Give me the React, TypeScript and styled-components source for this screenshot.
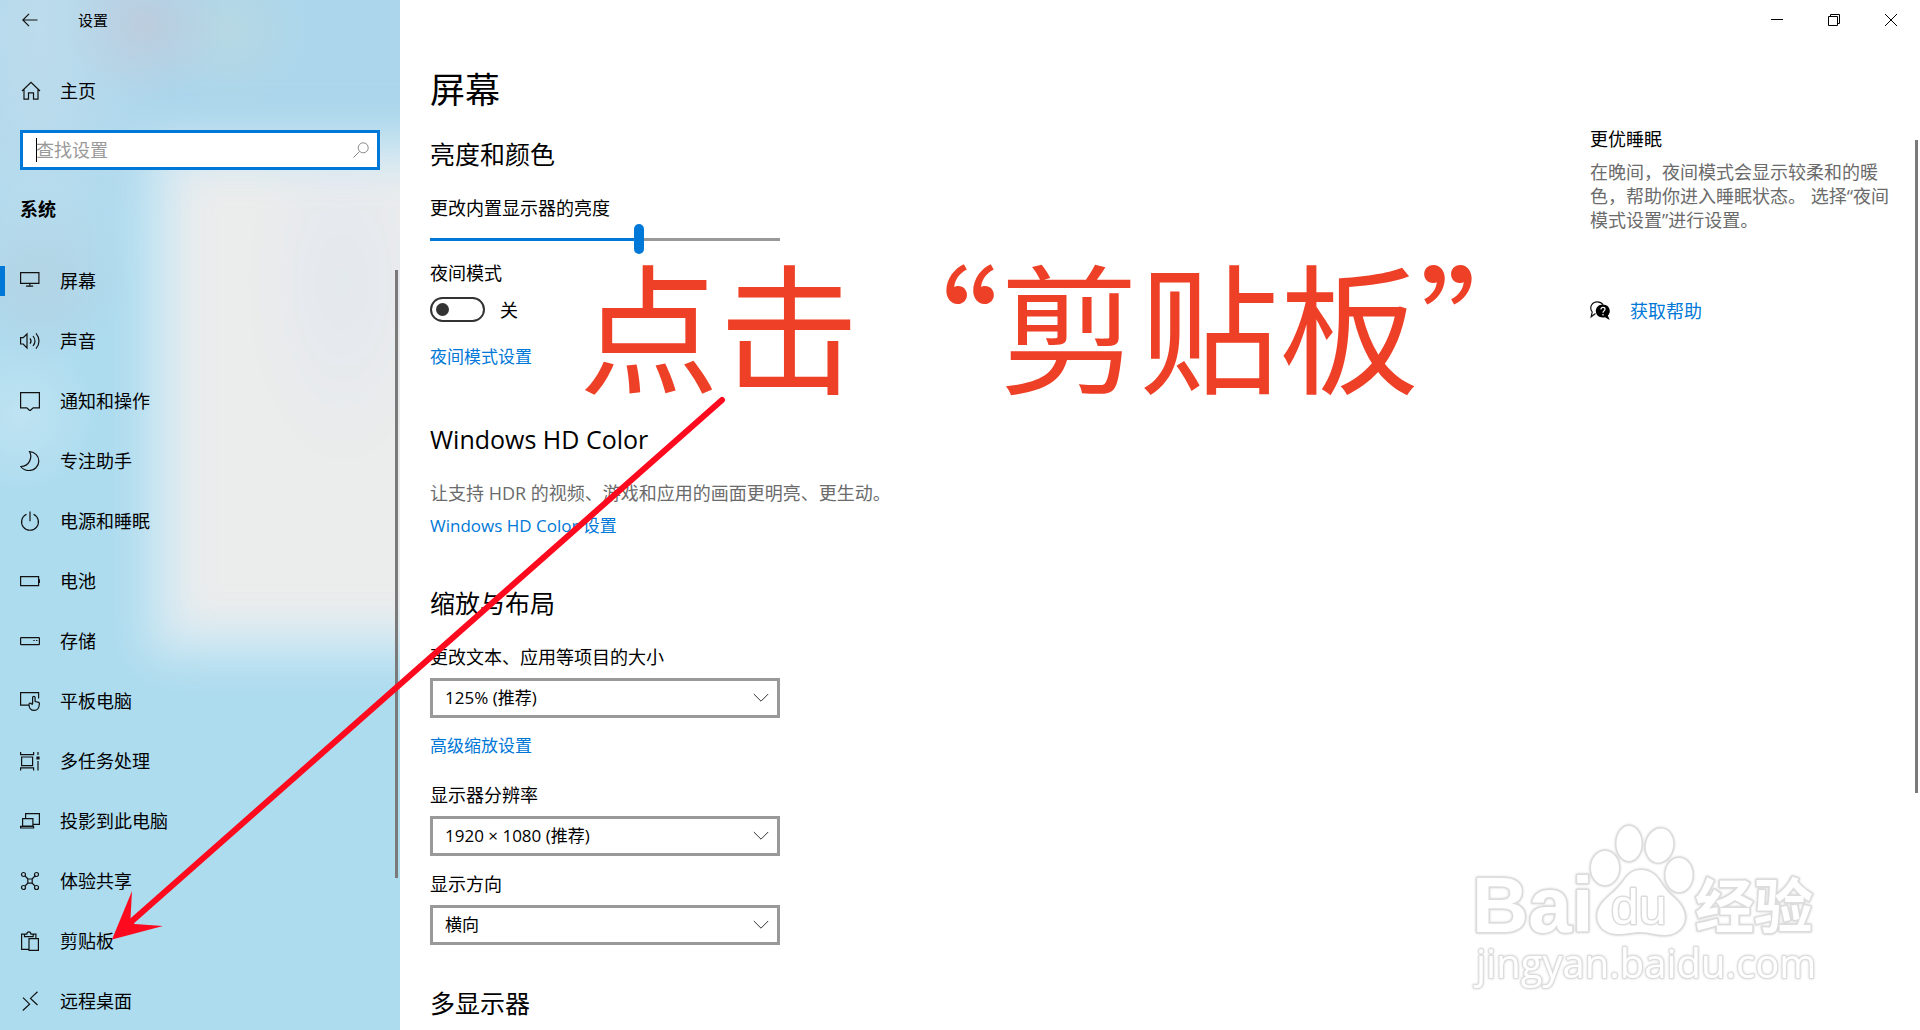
import React, { useState } from "react";
import styled, { createGlobalStyle } from "styled-components";

const BLUE = "#0078d7";
const GREY = "#999999";

const GlobalStyle = createGlobalStyle`
  * { box-sizing: border-box; }
  body {
    margin: 0;
    background: #fff;
    color: #000;
    font: 18px/24px "Open Sans", "Noto Sans CJK SC", sans-serif;
    overflow: hidden;
  }
  h1, h2, h3, p, ul { margin: 0; padding: 0; font-weight: 400; }
  button, input, select { font: inherit; color: inherit; }
`;

const Window = styled.div`
  position: relative;
  display: grid;
  grid-template-columns: 400px 1fr;
  height: 100vh;
  overflow: hidden;
`;

/* ---------- sidebar ---------- */

const Sidebar = styled.aside`
  position: relative;
  isolation: isolate;
  display: flex;
  flex-direction: column;
  min-height: 0;
  overflow: hidden;
  background:
    radial-gradient(circle at 145px 25px, rgba(190, 204, 220, 0.9), rgba(190, 204, 220, 0) 80px),
    radial-gradient(circle at 230px 30px, rgba(184, 216, 226, 0.9), rgba(184, 216, 226, 0) 80px),
    radial-gradient(ellipse at 40px 30px, #bddcec, rgba(189, 220, 236, 0) 130px),
    radial-gradient(circle at 40px 275px, rgba(174, 207, 224, 0.9), rgba(174, 207, 224, 0) 90px),
    radial-gradient(circle at 20px 415px, #bfe3f2, rgba(191, 227, 242, 0) 80px),
    linear-gradient(to bottom, #abd6ec 0, #abd6ec 100px, #addcef 220px);

  &::before {
    content: "";
    position: absolute;
    z-index: -1;
    left: 182px;
    right: -60px;
    top: 172px;
    height: 450px;
    background: radial-gradient(ellipse at 160px 110px, #e3e8ef, #ebecec 90px);
    box-shadow: 0 0 24px 34px rgba(220, 235, 243, 0.9);
    filter: blur(18px);
  }
`;

const SideTitle = styled.header`
  display: flex;
  align-items: center;
  flex: none;
  height: 40px;
  font-size: 15px;
`;

const BackButton = styled.button`
  display: grid;
  place-items: center;
  width: 60px;
  height: 40px;
  margin-right: 18px;
  padding: 0;
  border: 0;
  background: none;
`;

const HomeLink = styled.a`
  display: flex;
  align-items: center;
  flex: none;
  gap: 19px;
  height: 60px;
  margin-top: 21px;
  padding-left: 21px;
  color: inherit;
  text-decoration: none;
`;

const SearchBox = styled.label`
  display: flex;
  align-items: center;
  flex: none;
  height: 40px;
  margin: 9px 20px 27px;
  padding: 0 8px 0 13px;
  border: 3px solid ${BLUE};
  background: #fff;
`;

const Caret = styled.span`
  width: 1px;
  height: 24px;
  margin-right: -1px;
  background: #000;
`;

const SearchInput = styled.input`
  flex: 1;
  min-width: 0;
  padding: 0;
  border: 0;
  outline: 0;
  background: none;
  &::placeholder { color: ${GREY}; opacity: 1; }
`;

const SideHeading = styled.h2`
  flex: none;
  margin: 0 20px 30px;
  font-size: 18px;
  line-height: 24px;
  font-weight: 700;
`;

const SideBody = styled.div`
  display: flex;
  flex: 1;
  min-height: 0;
`;

const NavList = styled.ul`
  flex: 1;
  min-height: 0;
  overflow: hidden;
  list-style: none;
`;

const NavLink = styled.a<{ $active?: boolean }>`
  display: flex;
  align-items: center;
  gap: 20px;
  height: 60px;
  color: inherit;
  text-decoration: none;

  &::before {
    content: "";
    width: 5px;
    height: 30px;
    margin-right: -5px;
    background: ${(p) => (p.$active ? BLUE : "transparent")};
  }
`;

const Thumb = styled.div<{ $top: number; $share: number }>`
  flex: none;
  width: 3px;
  height: ${(p) => p.$share}%;
  margin-top: ${(p) => p.$top}px;
  margin-right: 2px;
  background: #7a7a7a;
`;

/* ---------- main ---------- */

const Main = styled.main`
  display: flex;
  flex-direction: column;
  min-width: 0;
  min-height: 0;
`;

const WindowBar = styled.div`
  display: flex;
  justify-content: flex-end;
  flex: none;
  height: 40px;
  padding-right: 1px;
`;

const WindowButton = styled.button`
  display: grid;
  place-items: center;
  width: 57px;
  padding: 0;
  border: 0;
  background: none;
`;

const Columns = styled.div`
  display: flex;
  flex: 1;
  min-height: 0;
`;

const Content = styled.div`
  flex: 1;
  min-width: 0;
  padding: 26px 30px 0;
`;

const PageTitle = styled.h1`
  margin-bottom: 22px;
  font-size: 35px;
  line-height: 48px;
`;

const Section = styled.section<{ $after: number }>`
  margin-bottom: ${(p) => p.$after}px;
`;

const SectionTitle = styled.h2`
  margin-bottom: 24px;
  font-size: 25px;
  line-height: 36px;
`;

const Field = styled.div<{ $gap: number; $after?: number }>`
  display: flex;
  flex-direction: column;
  align-items: flex-start;
  gap: ${(p) => p.$gap}px;
  margin-bottom: ${(p) => p.$after ?? 0}px;
`;

const Link = styled.a`
  display: inline-block;
  color: ${BLUE};
  font-size: 17px;
  text-decoration: none;
`;

const Muted = styled.p`
  color: #6b6b6b;
`;

const Slider = styled.input`
  appearance: none;
  display: block;
  width: 350px;
  max-width: 100%;
  height: 30px;
  margin: 0;
  background: none;

  &::-webkit-slider-runnable-track {
    height: 3px;
    background: linear-gradient(to right, ${BLUE} var(--fill), ${GREY} var(--fill));
  }
  &::-webkit-slider-thumb {
    appearance: none;
    width: 10px;
    height: 30px;
    margin-top: -14px;
    border-radius: 5px;
    background: ${BLUE};
  }
`;

const ToggleRow = styled.div`
  display: flex;
  align-items: center;
  gap: 15px;
  height: 25px;
`;

const Toggle = styled.input`
  appearance: none;
  display: flex;
  align-items: center;
  width: 55px;
  height: 25px;
  margin: 0;
  padding: 0 4px;
  border: 2px solid #333;
  border-radius: 13px;

  &::before {
    content: "";
    width: 13px;
    height: 13px;
    border-radius: 50%;
    background: #333;
  }
  &:checked { justify-content: flex-end; background: ${BLUE}; }
`;

const SelectBox = styled.div`
  display: grid;
  align-items: center;
  width: 350px;
  max-width: 100%;
  > * { grid-area: 1 / 1; }
  > svg { justify-self: end; margin-right: 11px; pointer-events: none; }
`;

const Select = styled.select`
  appearance: none;
  width: 100%;
  height: 40px;
  padding: 0 36px 0 12px;
  border: 3px solid ${GREY};
  border-radius: 0;
  background: #fff;
  font-size: 17px;
  line-height: 24px;
`;

const HelpColumn = styled.aside`
  flex: none;
  width: 304px;
  margin-right: 21px;
  padding-top: 87px;
`;

const HelpTitle = styled.h3`
  margin-bottom: 9px;
  font-size: 18px;
  line-height: 24px;
`;

const HelpLink = styled(Link)`
  display: flex;
  align-items: center;
  gap: 20px;
  margin-top: 67px;
  font-size: 18px;
`;

/* ---------- annotations ---------- */

const Callout = styled.p`
  position: absolute;
  left: 579px;
  top: 252px;
  color: #ee4027;
  font: 140px/140px "Noto Sans CJK SC", sans-serif;
  white-space: nowrap;
  pointer-events: none;
`;

const Arrow = styled.svg`
  position: absolute;
  left: 100px;
  top: 390px;
  pointer-events: none;
`;

const Watermark = styled.svg`
  position: absolute;
  right: 90px;
  bottom: 30px;
  pointer-events: none;
  filter: drop-shadow(0 0 1px #d0d0d0);
  fill: #fff;
  stroke: #dcdcdc;
  stroke-width: 3px;
  paint-order: stroke;
  stroke-linejoin: round;
`;

const Icon = ({ children, size = 20 }: { children: React.ReactNode; size?: number }) => (
  <svg width={size} height={size} viewBox={`0 0 ${size} ${size}`} fill="none" stroke="#111" strokeWidth="1.2" aria-hidden="true">
    {children}
  </svg>
);

const navItems: { label: string; icon: React.ReactNode }[] = [
  { label: "屏幕", icon: <path d="M.6 1.600h18.300v10.800H.6zM9.800 12.400v2.600M6 15.100h7.200" /> },
  {
    label: "声音",
    icon: <path d="M.6 6.700h2.600L7 3v14l-3.800-4H.6zM10 7.300c1.200 1.600 1.200 3.900 0 5.400M13 5c2.400 3 2.400 7 0 10M16 2.300c4 4.600 4 10.800 0 15.400" />,
  },
  { label: "通知和操作", icon: <path d="M.6 1.600h18.800v15.300h-6.200L10 19.800l-3.200-2.900H.6z" /> },
  { label: "专注助手", icon: <path d="M9.600.7c3 5.600 0 14.600-8.800 14.800 2.200 3.200 5.400 4 8.200 4 5.600 0 9.800-4.300 9.800-9.500 0-4.800-3.600-9-9.200-9.300z" /> },
  { label: "电源和睡眠", icon: <path d="M10 .5v9.800M6.500 3.200a8.400 8.400 0 1 0 7 0" /> },
  {
    label: "电池",
    icon: (
      <>
        <path d="M.6 5.600h18v9H.6z" />
        <path d="M19.400 8.200v3.800" />
      </>
    ),
  },
  {
    label: "存储",
    icon: (
      <>
        <rect x=".6" y="6.600" width="18.800" height="7" rx=".6" />
        <path d="M13.300 9.500h1.400M16 9.500h1.400" />
      </>
    ),
  },
  {
    label: "平板电脑",
    icon: (
      <>
        <path d="M9 14.200H.6V1.600h18v6" />
        <path d="M12.600 13V6.600c0-1.700 2.500-1.700 2.500 0v4l2.900.6c1 .2 1.500.9 1.400 1.800-.3 3.400-1.700 6.400-5 6.400-3.800 0-5.400-2.500-5.400-6 0-1 .9-1.700 1.900-1.200l1.700 1.600" />
      </>
    ),
  },
  {
    label: "多任务处理",
    icon: (
      <>
        <path d="M.6 1v2.700h13V1M1.600 6h11v8.600h-11zM.6 19.500v-2.700h13v2.700M18 1v3M18 10v9.500" />
        <path d="M16.400 7h3.200" strokeWidth="3" />
      </>
    ),
  },
  { label: "投影到此电脑", icon: <path d="M5.600 7.500V2.600h13.800v10.800h-6.500M2.600 7.600h10.300v7.500H2.600zM.6 17v-1.600h13V17z" /> },
  {
    label: "体验共享",
    icon: (
      <>
        <circle cx="3.500" cy="3.500" r="2" />
        <circle cx="16.500" cy="3.500" r="2" />
        <circle cx="3.500" cy="16.500" r="2" />
        <circle cx="16.500" cy="16.500" r="2" />
        <path d="M7.800 8h4.400v4.200H7.800zM5 5l3 3M15 5l-3 3M5 15l3-3M15 15l-3-3" />
      </>
    ),
  },
  {
    label: "剪贴板",
    icon: <path d="M8.500 18.400H1.600V3.200h4.200M11.700 3.200h4.200v4M4.500 5.600V3.200h2.300C7 0 10.700 0 11 3.200h2.200v2.400zM9 7.600h9.400v11.800H9z" />,
  },
  { label: "远程桌面", icon: <path d="M3 6.600l6.600 6.600L2.800 19.500M17.500.8l-7 6.600 7 6.600" /> },
];

const Dropdown = ({ id, label, value }: { id: string; label: string; value: string }) => (
  <>
    <label htmlFor={id}>{label}</label>
    <SelectBox>
      <Select id={id} defaultValue={value}>
        <option>{value}</option>
      </Select>
      <svg width="16" height="10" viewBox="0 0 16 10" fill="none" stroke="#333" aria-hidden="true">
        <path d="M.8 1l7.200 7.200L15.200 1" />
      </svg>
    </SelectBox>
  </>
);

export default function App() {
  const [brightness, setBrightness] = useState(60);

  return (
    <>
      <GlobalStyle />
      <Window lang="zh-CN">
        <Sidebar>
          <SideTitle>
            <BackButton aria-label="返回">
              <svg width="16" height="14" viewBox="0 0 16 14" fill="none" stroke="#111" strokeWidth="1.200">
                <path d="M15.500 7H.8M7 .8L.8 7 7 13.200" />
              </svg>
            </BackButton>
            设置
          </SideTitle>
          <HomeLink href="#home">
            <Icon>
              <path d="M1 10L10 1.400 19 10M3 8.400v9.800h4.500v-6.400h5v6.400H17V8.400" />
            </Icon>
            主页
          </HomeLink>
          <SearchBox>
            <Caret />
            <SearchInput type="text" placeholder="查找设置" aria-label="查找设置" />
            <svg width="16" height="16" viewBox="0 0 16 16" fill="none" stroke="#888" aria-hidden="true">
              <circle cx="10.200" cy="5.800" r="5" />
              <path d="M6.600 9.400L.5 15.500" />
            </svg>
          </SearchBox>
          <SideHeading>系统</SideHeading>
          <SideBody>
            <NavList>
              {navItems.map((item, i) => (
                <li key={item.label}>
                  <NavLink href={`#${item.label}`} $active={i === 0}>
                    <Icon>{item.icon}</Icon>
                    {item.label}
                  </NavLink>
                </li>
              ))}
            </NavList>
            <Thumb $top={19} $share={78} />
          </SideBody>
        </Sidebar>

        <Main>
          <WindowBar>
            <WindowButton aria-label="最小化">
              <svg width="12" height="12" stroke="#000"><path d="M0 5.500h12" /></svg>
            </WindowButton>
            <WindowButton aria-label="还原">
              <svg width="12" height="12" fill="none" stroke="#000"><path d="M.5 2.500h9v9h-9zM2.500 2.500v-2h9v9h-2" /></svg>
            </WindowButton>
            <WindowButton aria-label="关闭">
              <svg width="12" height="12" stroke="#000"><path d="M0 0l12 12M12 0L0 12" /></svg>
            </WindowButton>
          </WindowBar>
          <Columns>
            <Content>
              <PageTitle>屏幕</PageTitle>

              <Section $after={52}>
                <SectionTitle>亮度和颜色</SectionTitle>
                <Field $gap={4} $after={7}>
                  <label htmlFor="brightness">更改内置显示器的亮度</label>
                  <Slider
                    id="brightness"
                    type="range"
                    value={brightness}
                    onChange={(e) => setBrightness(Number(e.target.value))}
                    style={{ "--fill": `${brightness}%` } as React.CSSProperties}
                  />
                </Field>
                <Field $gap={12} $after={23}>
                  <label htmlFor="night">夜间模式</label>
                  <ToggleRow>
                    <Toggle id="night" type="checkbox" role="switch" />
                    <span>关</span>
                  </ToggleRow>
                </Field>
                <Field $gap={0}>
                  <Link href="#night">夜间模式设置</Link>
                </Field>
              </Section>

              <Section $after={47}>
                <SectionTitle>Windows HD Color</SectionTitle>
                <Field $gap={9}>
                  <Muted>让支持 HDR 的视频、游戏和应用的画面更明亮、更生动。</Muted>
                  <Link href="#hdr">Windows HD Color 设置</Link>
                </Field>
              </Section>

              <Section $after={40}>
                <SectionTitle>缩放与布局</SectionTitle>
                <Field $gap={9} $after={16}>
                  <Dropdown id="scale" label="更改文本、应用等项目的大小" value="125% (推荐)" />
                </Field>
                <Field $gap={0} $after={25}>
                  <Link href="#scaling">高级缩放设置</Link>
                </Field>
                <Field $gap={9} $after={16}>
                  <Dropdown id="resolution" label="显示器分辨率" value="1920 × 1080 (推荐)" />
                </Field>
                <Field $gap={9}>
                  <Dropdown id="orientation" label="显示方向" value="横向" />
                </Field>
              </Section>

              <SectionTitle>多显示器</SectionTitle>
            </Content>

            <HelpColumn>
              <HelpTitle>更优睡眠</HelpTitle>
              <Muted>在晚间，夜间模式会显示较柔和的暖色，帮助你进入睡眠状态。 选择“夜间模式设置”进行设置。</Muted>
              <HelpLink href="#help">
                <Icon>
                  <path d="M5.500 12.600L1.200 15.800l1-4.800C-1.200 6.500 2 .8 7.200.8c2.800 0 4.700 1.100 5.800 2.800" />
                  <path d="M12.800 3.400c4 0 7 2.800 7 6.500 0 1.900-.8 3.500-2 4.700l1.900 4.400-4.700-2.800c-5 1.200-9.200-1.800-9.200-6.200 0-3.800 3-6.600 7-6.600z" fill="#000" stroke="none" />
                  <path d="M11 8.400c0-2.700 4-2.500 4-.2 0 1.700-2 1.700-2 3.500M13 13v1.400" stroke="#fff" />
                </Icon>
                获取帮助
              </HelpLink>
            </HelpColumn>
            <Thumb $top={100} $share={66} />
          </Columns>
        </Main>

        <Callout>点击“剪贴板”</Callout>
        <Arrow width="640" height="560" viewBox="100 390 640 560" aria-hidden="true">
          <path d="M722 400L132 921" stroke="#fd0a1e" strokeWidth="6" strokeLinecap="round" />
          <path d="M112 939.500L132 891l-1.500 28 4 5 28.500 2z" fill="#fd0a1e" />
        </Arrow>
        <Watermark width="360" height="180" viewBox="1470 820 360 180" role="img" aria-label="Baidu 经验">
          <text x="1472" y="932" fontFamily="Liberation Sans" fontWeight="700" fontSize="78">Bai</text>
          <ellipse cx="1605" cy="868" rx="14" ry="17" />
          <ellipse cx="1629" cy="843.500" rx="12.500" ry="17.500" />
          <ellipse cx="1659.500" cy="845.500" rx="13.500" ry="17" transform="rotate(12 1659.500 845.500)" />
          <ellipse cx="1679" cy="875" rx="13.500" ry="17" />
          <path d="M1641 870c9 0 15 5 20 13 6 10 12 13 18 20 13 16 2 32-14 32-10 0-15-3-24-3s-13 2-23 2c-20 0-27-19-14-33 7-7 13-11 19-19 5-8 10-12 18-12z" />
          <text x="1611" y="924" fontFamily="Liberation Sans" fontSize="50">du</text>
          <text x="1695" y="928" fontFamily="Noto Sans CJK SC" fontWeight="700" fontSize="59">经验</text>
          <text x="1476" y="978" fontFamily="Open Sans" fontSize="40" strokeWidth="2">jingyan.baidu.com</text>
        </Watermark>
      </Window>
    </>
  );
}
